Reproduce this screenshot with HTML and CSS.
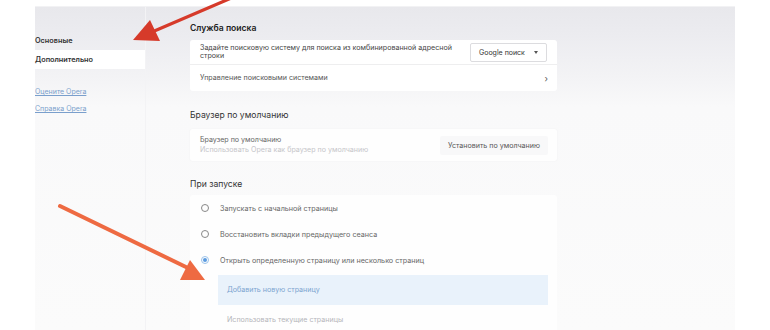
FILE: index.html
```html
<!DOCTYPE html>
<html lang="ru">
<head>
<meta charset="utf-8">
<link rel="stylesheet" href="styles.css">
</head>
<body>
<div class="window">
  <aside class="sidebar">
    <div class="nav-item">Основные</div>
    <div class="nav-item active">Дополнительно</div>
    <div class="links">
      <a class="link" href="#">Оцените Opera</a>
      <a class="link" href="#">Справка Opera</a>
    </div>
  </aside>
  <main class="main">
    <h2 class="section-title bold">Служба поиска</h2>
    <div class="card card-search">
      <div class="row row-engine">
        <div class="row-text">Задайте поисковую систему для поиска из комбинированной адресной строки</div>
        <div class="select">Google поиск <span class="caret"></span></div>
      </div>
      <div class="row row-manage">
        <div class="row-text">Управление поисковыми системами</div>
        <span class="chev">›</span>
      </div>
    </div>

    <h2 class="section-title title-default">Браузер по умолчанию</h2>
    <div class="card card-default">
      <div class="row row-browser">
        <div class="stack">
          <div class="row-text">Браузер по умолчанию</div>
          <div class="sub">Использовать Opera как браузер по умолчанию</div>
        </div>
        <div class="btn">Установить по умолчанию</div>
      </div>
    </div>

    <h2 class="section-title title-start">При запуске</h2>
    <div class="card card-start">
      <div class="radio-row"><span class="radio"></span><span class="radio-label">Запускать с начальной страницы</span></div>
      <div class="radio-row"><span class="radio"></span><span class="radio-label">Восстановить вкладки предыдущего сеанса</span></div>
      <div class="radio-row"><span class="radio checked"></span><span class="radio-label">Открыть определенную страницу или несколько страниц</span></div>
      <div class="pages">
        <div class="page-add">Добавить новую страницу</div>
        <div class="page-use">Использовать текущие страницы</div>
      </div>
    </div>
  </main>
</div>

<svg class="arrows" width="770" height="330" viewBox="0 0 770 330">
  <line x1="236" y1="-4" x2="152" y2="32" stroke="#d63a2a" stroke-width="3.2" stroke-linecap="round"/>
  <polygon points="133,40 150,20 160,41" fill="#d63a2a"/>
  <line x1="60" y1="206" x2="188" y2="268" stroke="#ee6a42" stroke-width="4" stroke-linecap="round"/>
  <polygon points="205,280 180,280 190,260" fill="#ee6a42"/>
</svg>
</body>
</html>
```
FILE: styles.css
```css
* { box-sizing: border-box; }
html, body {
  margin: 0;
  padding: 0;
  background: #ffffff;
  width: 770px;
  height: 330px;
  overflow: hidden;
  font-family: "Inter", "Noto Sans", sans-serif;
  color: #333;
}
.window {
  margin: 6px 0 0 35px;
  width: 700px;
  height: 324px;
  display: flex;
  background: linear-gradient(to bottom, #e8e8ec 0, #ececf0 30px, #f3f3f5 70px, #f9f9fa 100px, #fbfbfb 100%);
  border-top: 1px solid #f2f2f4;
}
.sidebar {
  width: 111px;
  padding-top: 24px;
  border-right: 1px solid #f3f3f5;
  display: flex;
  flex-direction: column;
}
.nav-item {
  height: 19px;
  line-height: 19px;
  font-size: 7.3px;
  font-weight: 600;
  color: #333;
}
.nav-item.active {
  background: #ffffff;
}
.links {
  display: flex;
  flex-direction: column;
  gap: 7px;
  padding-top: 18px;
}
.link {
  font-size: 7px;
  color: #7a9fcc;
  text-decoration: underline;
  line-height: 10px;
}
.main {
  padding: 15px 0 0 44px;
  width: 412px;
}
.section-title {
  margin: 0;
  font-size: 8.6px;
  font-weight: 400;
  color: #333;
  height: 12px;
  line-height: 12px;
}
.section-title.bold { font-weight: 600; color: #222; }
.card {
  background: #fff;
  border-radius: 3px;
  width: 367px;
}
.card-search { margin-top: 6px; }
.row {
  display: flex;
  align-items: center;
  justify-content: space-between;
  padding: 0 10px 0 10px;
}
.row-engine {
  height: 25px;
  border-bottom: 1px solid #eeeeef;
}
.row-manage { height: 26px; padding-right: 9px; }
.row-text {
  font-size: 7.1px;
  line-height: 8.5px;
  color: #444;
}
.row-engine .row-text { width: 260px; }
.row-manage .row-text { color: #555; }
.select {
  width: 77px;
  height: 19px;
  border: 1px solid #dcdcdf;
  border-radius: 2px;
  font-size: 7px;
  color: #333;
  display: flex;
  align-items: center;
  justify-content: space-between;
  padding: 0 8px 0 8px;
}
.caret {
  width: 0;
  height: 0;
  border-left: 2.5px solid transparent;
  border-right: 2.5px solid transparent;
  border-top: 3px solid #555;
}
.chev {
  font-size: 9px;
  color: #555;
}
.title-default { margin-top: 18px; }
.card-default {
  margin-top: 8px;
  background: #fefefe;
  box-shadow: 0 0 0 1px #f7f7f8;
}
.row-browser { height: 32px; padding-right: 9px; }
.stack { display: flex; flex-direction: column; gap: 1px; }
.row-browser .row-text { color: #666; }
.sub {
  font-size: 7.1px;
  line-height: 8.5px;
  color: #c5c5c9;
}
.btn {
  width: 108px;
  height: 19px;
  background: #f8f8f9;
  border-radius: 2px;
  font-size: 7.1px;
  color: #555;
  display: flex;
  align-items: center;
  justify-content: center;
}
.title-start { margin-top: 17px; }
.card-start {
  margin-top: 5px;
  height: 140px;
  padding: 0 9px 0 10px;
  background: #fefefe;
}
.radio-row {
  height: 26px;
  display: flex;
  align-items: center;
  gap: 11px;
}
.radio {
  width: 8px;
  height: 8px;
  border-radius: 50%;
  border: 1px solid #888;
  margin-left: 1px;
  display: flex;
  align-items: center;
  justify-content: center;
}
.radio.checked {
  border-color: #9cc3ea;
}
.radio.checked::after {
  content: "";
  width: 4px;
  height: 4px;
  border-radius: 50%;
  background: #5b9be0;
}
.radio-label {
  font-size: 7.2px;
  color: #666;
}
.pages {
  margin-left: 18px;
  padding-top: 2px;
}
.page-add {
  height: 30px;
  line-height: 30px;
  background: #e9f2fb;
  font-size: 7.1px;
  color: #7ba3cf;
  padding-left: 9px;
}
.page-use {
  height: 30px;
  line-height: 30px;
  font-size: 7.1px;
  color: #b5b5ba;
  padding-left: 9px;
}
.arrows {
  position: absolute;
  left: 0;
  top: 0;
  pointer-events: none;
}
```
